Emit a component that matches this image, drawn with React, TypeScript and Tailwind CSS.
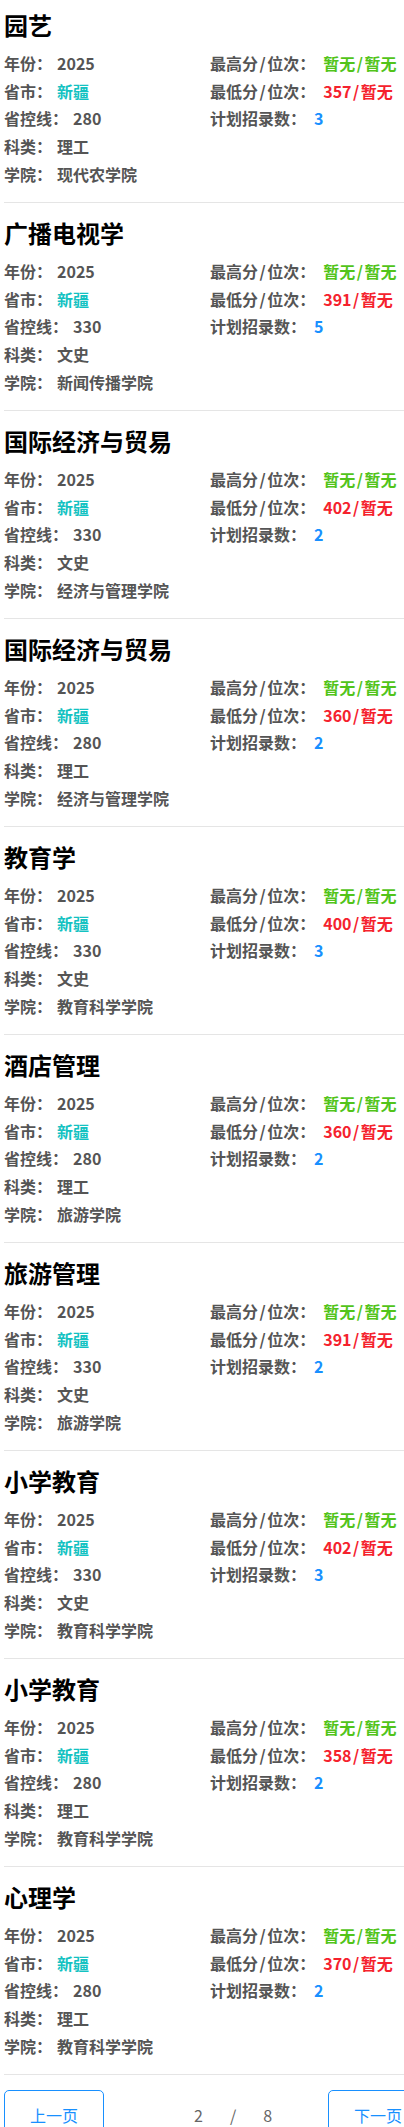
const items = [
  { name: "园艺", line: "280", kind: "理工", school: "现代农学院", low: "357/暂无", plan: "3" },
  { name: "广播电视学", line: "330", kind: "文史", school: "新闻传播学院", low: "391/暂无", plan: "5" },
  { name: "国际经济与贸易", line: "330", kind: "文史", school: "经济与管理学院", low: "402/暂无", plan: "2" },
  { name: "国际经济与贸易", line: "280", kind: "理工", school: "经济与管理学院", low: "360/暂无", plan: "2" },
  { name: "教育学", line: "330", kind: "文史", school: "教育科学学院", low: "400/暂无", plan: "3" },
  { name: "酒店管理", line: "280", kind: "理工", school: "旅游学院", low: "360/暂无", plan: "2" },
  { name: "旅游管理", line: "330", kind: "文史", school: "旅游学院", low: "391/暂无", plan: "2" },
  { name: "小学教育", line: "330", kind: "文史", school: "教育科学学院", low: "402/暂无", plan: "3" },
  { name: "小学教育", line: "280", kind: "理工", school: "教育科学学院", low: "358/暂无", plan: "2" },
  { name: "心理学", line: "280", kind: "理工", school: "教育科学学院", low: "370/暂无", plan: "2" },
];

// the slash in the reference font is a bit wider than Noto's
function Slashed({ text }: { text: string }) {
  const parts = text.split("/");
  return (
    <>
      {parts.map((p, i) => (
        <span key={i}>
          {i > 0 && <span className="mx-[1.5px]">/</span>}
          {p}
        </span>
      ))}
    </>
  );
}

function Field({
  label,
  value,
  color = "text-[#555555]",
  gap = "ml-[5px]",
}: {
  label: string;
  value: string;
  color?: string;
  gap?: string;
}) {
  return (
    <div className="flex h-[27.8px] items-center whitespace-nowrap">
      <span className="text-[#555555]">
        <Slashed text={label} />
      </span>
      <span className={`${gap} ${color}`}>
        <Slashed text={value} />
      </span>
    </div>
  );
}

export default function App() {
  return (
    <div
      className="w-[404px] overflow-hidden bg-white pl-[4px] text-[16px] font-bold"
      style={{ fontFamily: '"Noto Sans CJK SC", "Noto Sans", sans-serif' }}
    >
      {items.map((it, i) => (
        <div key={i}>
          <div className="pt-[7px]">
            <h2 className="text-[24px] leading-[36px] font-bold text-black">{it.name}</h2>
            <div className="mt-[6px] grid grid-cols-[206px_1fr]">
              <div>
                <Field label="年份：" value="2025" />
                <Field label="省市：" value="新疆" color="text-[#13c2c2]" />
                <Field label="省控线：" value={it.line} />
                <Field label="科类：" value={it.kind} />
                <Field label="学院：" value={it.school} />
              </div>
              <div>
                <Field label="最高分/位次：" value="暂无/暂无" color="text-[#52c41a]" gap="ml-[8px]" />
                <Field label="最低分/位次：" value={it.low} color="text-[#f5222d]" gap="ml-[8px]" />
                <Field label="计划招录数：" value={it.plan} color="text-[#1890ff]" gap="ml-[8px]" />
              </div>
            </div>
          </div>
          <div className="mt-[14px] mb-[5px] h-px bg-[#e5e5e5]" />
        </div>
      ))}
      <div className="mt-[15px] flex items-start pb-[20px] font-normal">
        <button className="flex h-[50px] w-[100px] shrink-0 items-center justify-center rounded-[5px] border border-[#1890ff] text-[16px] text-[#1890ff]">
          上一页
        </button>
        <div className="ml-[90px] flex h-[50px] shrink-0 items-center gap-[27px] text-[16px] text-[#666666]">
          <span>2</span>
          <span>/</span>
          <span>8</span>
        </div>
        <button className="ml-[56px] flex h-[50px] w-[100px] shrink-0 items-center justify-center rounded-[5px] border border-[#1890ff] text-[16px] text-[#1890ff]">
          下一页
        </button>
      </div>
    </div>
  );
}
